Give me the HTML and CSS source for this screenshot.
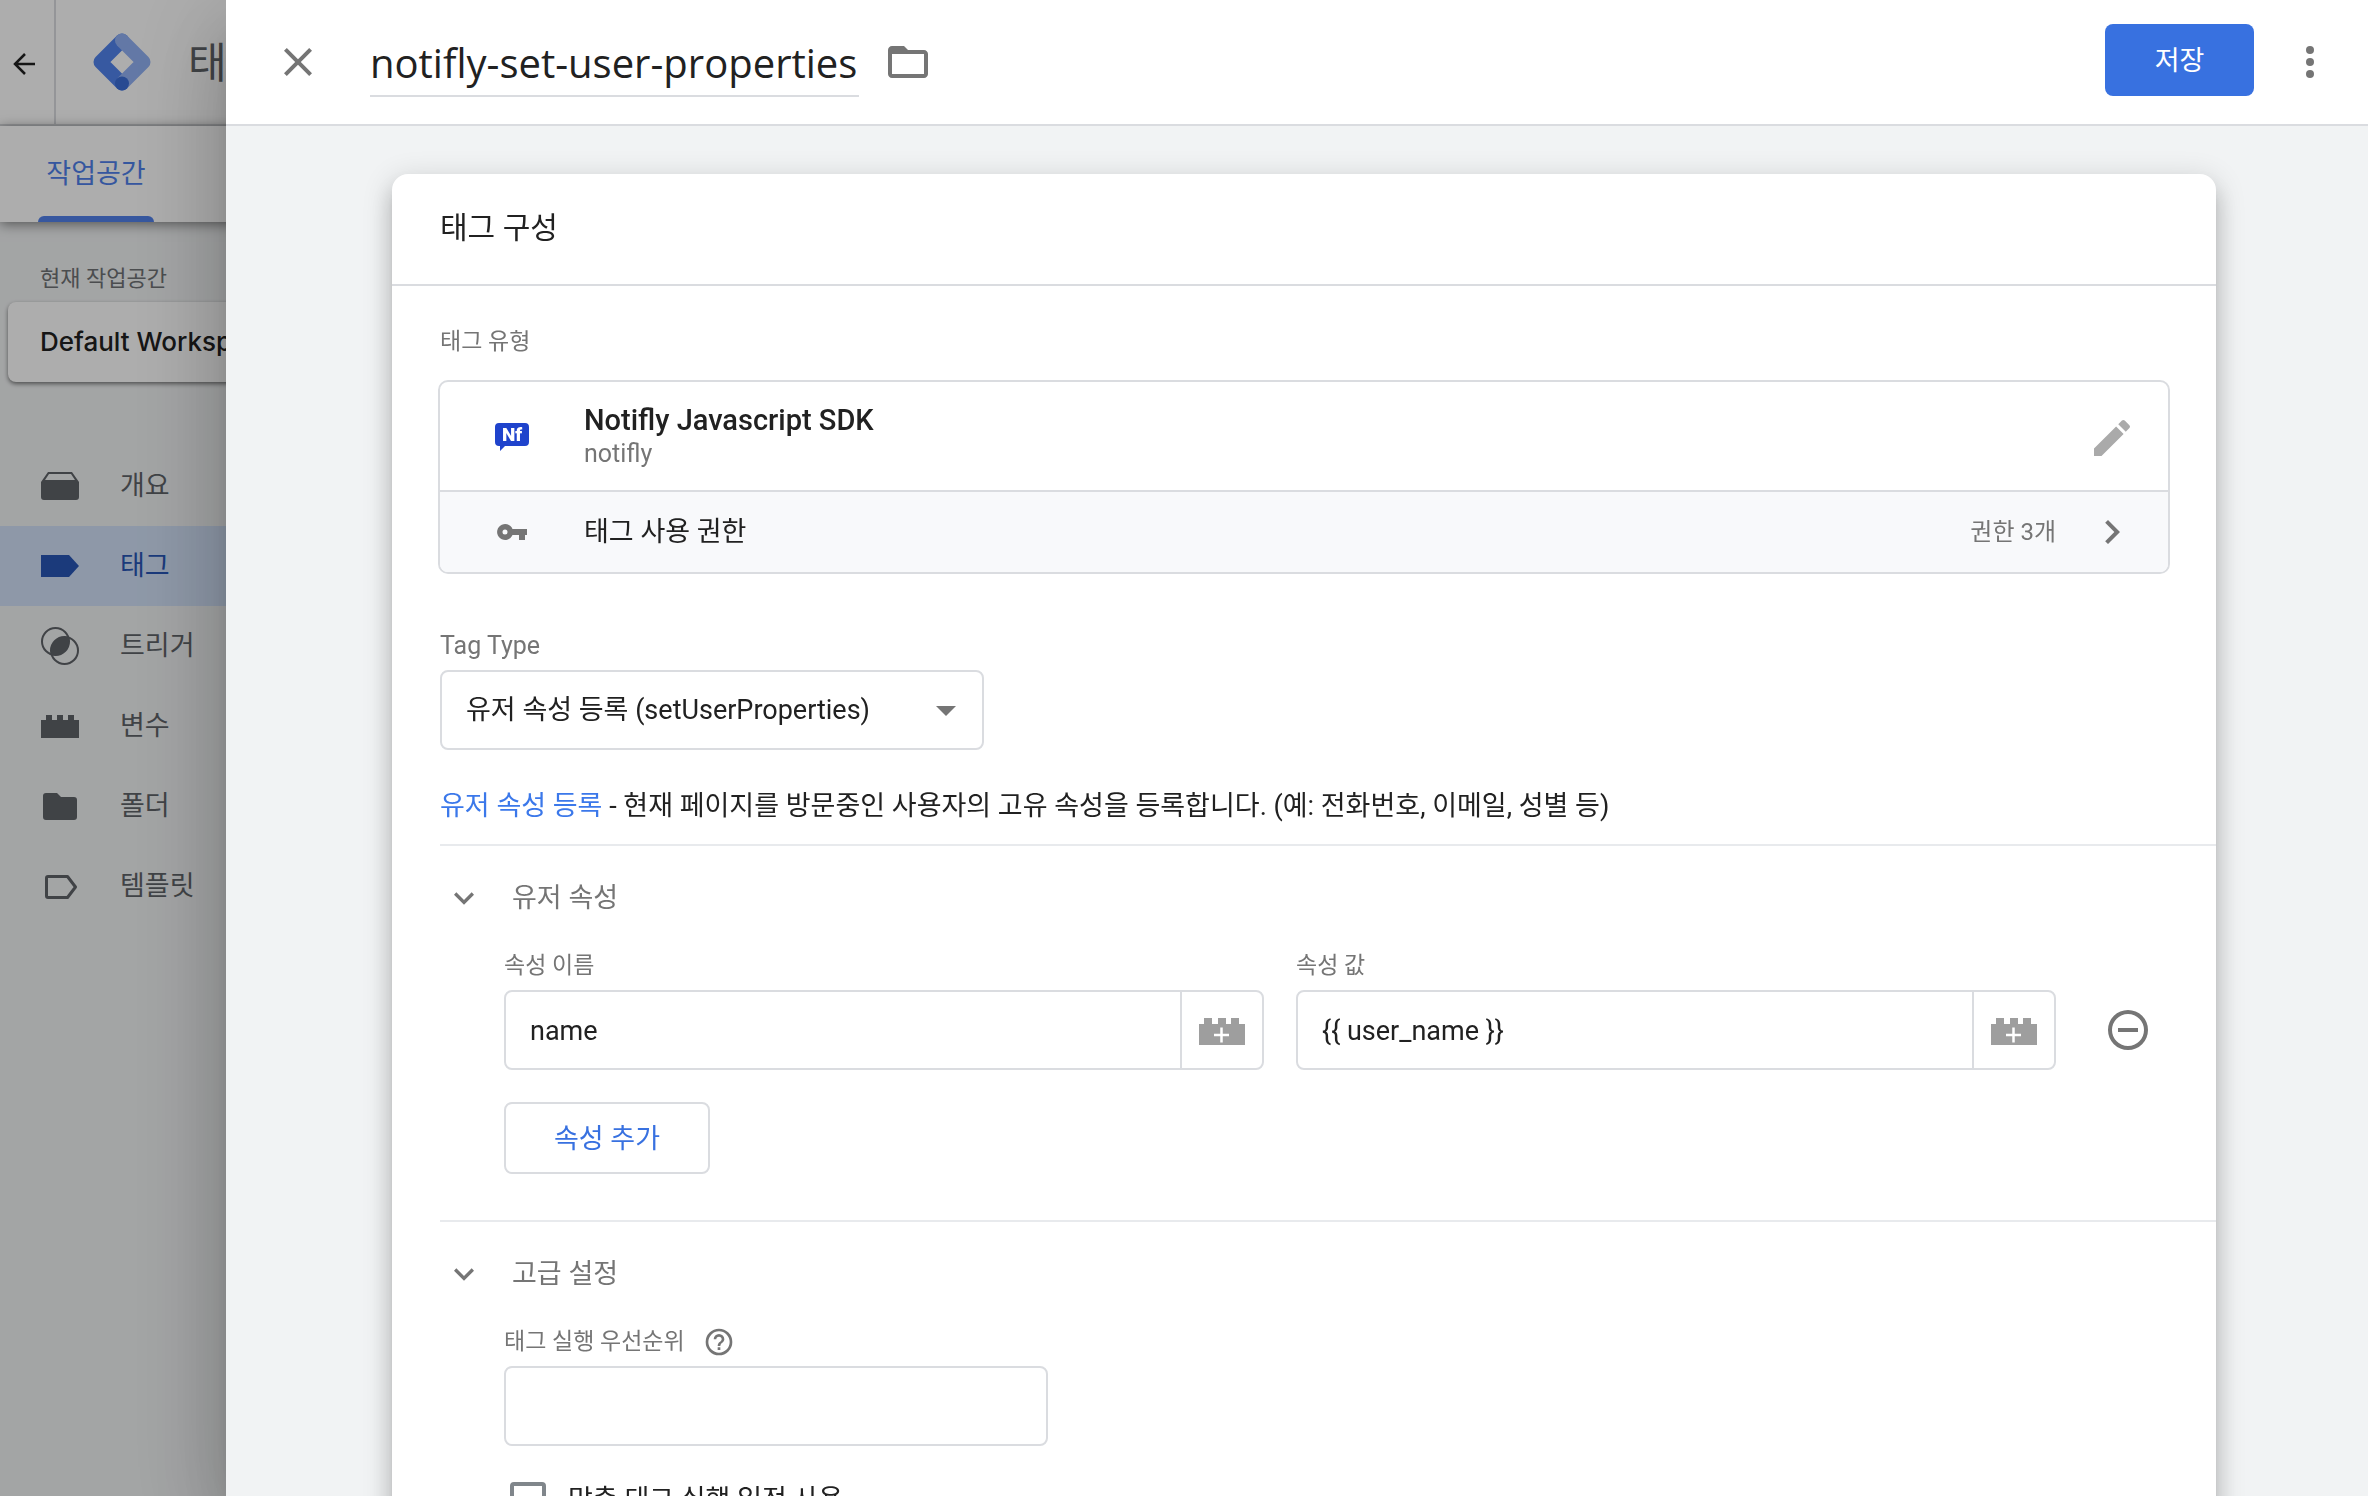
FILE: index.html
```html
<!DOCTYPE html>
<html lang="ko">
<head>
<meta charset="utf-8">
<meta name="viewport" content="width=device-width, initial-scale=1">
<title>notifly-set-user-properties</title>
<link rel="stylesheet" href="styles.css">
</head>
<body>
<svg class="sprite" aria-hidden="true">
  <symbol id="brick-plus" viewBox="0 0 46 28">
    <path fill="#9e9e9e" d="M0 6h5V0h8v6h6V0h8v6h5V0h8v6h6v21H0z"/>
    <path fill="none" stroke="#fff" stroke-width="2.500" d="M15 17h15M22.500 9.500v15"/>
  </symbol>
  <symbol id="expand" viewBox="0 0 24 24"><path d="M16.590 8.590L12 13.170 7.410 8.590 6 10l6 6 6-6z"/></symbol>
</svg>

<div class="app">
  <header class="topbar">
    <a class="back" href="#" aria-label="뒤로">
      <svg class="outline" width="32" height="32" viewBox="0 0 32 32" stroke="#212121" stroke-width="2.500"><path d="M27 16H7M17 6L7 16l10 10"/></svg>
    </a>
    <svg class="logo" width="60" height="60" viewBox="0 0 60 60" stroke-width="14" stroke-linejoin="round" stroke-linecap="round">
      <path stroke="#5284ee" d="M30 8.500L8.500 30 30 51.500"/>
      <path stroke="#92b2f5" stroke-linecap="butt" d="M30 51.500L51.500 30 30 8.500"/>
      <g stroke="none"><circle cx="30" cy="8.500" r="7" fill="#92b2f5"/><circle cx="30" cy="51.500" r="7" fill="#3b6ed8"/></g>
    </svg>
    <span class="product">태그 관리자</span>
  </header>
  <nav class="tabs"><a class="tab" href="#">작업공간</a></nav>
  <aside class="sidebar">
    <p class="workspace-label">현재 작업공간</p>
    <button class="workspace" type="button">Default Workspace</button>
    <ul class="nav">
      <li><a href="#"><svg width="40" height="32" viewBox="0 0 40 32"><path d="M1 12L8 2h24l7 10v15a3 3 0 0 1-3 3H4a3 3 0 0 1-3-3zM9 4L5 10h30l-4-6z" fill-rule="evenodd"/></svg>개요</a></li>
      <li><a class="active" href="#"><svg width="40" height="32" viewBox="0 0 40 32"><path d="M1 5h28l10 11-10 11H1z"/></svg>태그</a></li>
      <li><a href="#"><svg width="40" height="40" viewBox="0 0 40 40"><g fill="none" stroke="currentColor" stroke-width="2"><circle cx="15.500" cy="15.500" r="13.500"/><circle cx="24.500" cy="24.500" r="13.500"/></g><path d="M28.300 11.700A13.500 13.500 0 0 1 11.700 28.300 13.500 13.500 0 0 1 28.300 11.700z" stroke="currentColor"/></svg>트리거</a></li>
      <li><a href="#"><svg width="40" height="32" viewBox="0 0 40 32"><path d="M1 10h5V5h6v5h5V5h6v5h5V5h6v5h5v18H1z"/></svg>변수</a></li>
      <li><a href="#"><svg width="40" height="32" viewBox="0 0 40 32"><path d="M6 3h11l4 4h13a3 3 0 0 1 3 3v17a3 3 0 0 1-3 3H6a3 3 0 0 1-3-3V6a3 3 0 0 1 3-3z"/></svg>폴더</a></li>
      <li><a href="#"><svg width="40" height="32" viewBox="0 0 40 32"><path fill="none" stroke="currentColor" stroke-width="3" stroke-linejoin="round" d="M8 6.500h19.500l8 10.500-8 10.500H8a1.500 1.500 0 0 1-1.500-1.500V8A1.500 1.500 0 0 1 8 6.500z"/></svg>템플릿</a></li>
    </ul>
  </aside>
</div>

<div class="scrim"></div>

<main class="drawer">
  <header class="drawer-header">
    <button class="icon-button" type="button" aria-label="닫기"><svg width="48" height="48" viewBox="0 0 24 24"><path d="M19 6.410L17.590 5 12 10.590 6.410 5 5 6.410 10.590 12 5 17.590 6.410 19 12 13.410 17.590 19 19 17.590 13.410 12z"/></svg></button>
    <input class="tag-name" type="text" value="notifly-set-user-properties" aria-label="태그 이름">
    <button class="icon-button folder" type="button" aria-label="폴더"><svg width="48" height="48" viewBox="0 0 24 24"><path d="M9.170 6l2 2H20v10H4V6h5.170M10 4H4c-1.100 0-2 .9-2 2v12c0 1.100.9 2 2 2h16c1.100 0 2-.9 2-2V8c0-1.100-.9-2-2-2h-8l-2-2z"/><path d="M4 5h6l2 3H4z"/></svg></button>
    <button class="save" type="button">저장</button>
    <button class="icon-button" type="button" aria-label="더보기"><svg width="48" height="48" viewBox="0 0 24 24"><circle cx="12" cy="6" r="2"/><circle cx="12" cy="12" r="2"/><circle cx="12" cy="18" r="2"/></svg></button>
  </header>

  <div class="drawer-body">
    <section class="card">
      <h2 class="card-title">태그 구성</h2>
      <div class="card-body">
        <p class="label type-label">태그 유형</p>
        <div class="type-box">
          <div class="type-row product-row">
            <svg class="type-icon" width="36" height="32" viewBox="0 0 36 32">
              <path fill="#1f43cc" d="M5 1h26a4 4 0 0 1 4 4v15a4 4 0 0 1-4 4H11l-5 5v-5H5a4 4 0 0 1-4-4V5a4 4 0 0 1 4-4z"/>
              <text class="badge-text" x="18" y="19" text-anchor="middle">Nf</text>
            </svg>
            <div class="type-text">
              <div class="type-name">Notifly Javascript SDK</div>
              <div class="type-vendor">notifly</div>
            </div>
            <button class="icon-button pencil" type="button" aria-label="수정"><svg width="48" height="48" viewBox="0 0 24 24"><path d="M3 17.250V21h3.750L17.810 9.940l-3.750-3.750L3 17.250zM20.710 7.040a1 1 0 0 0 0-1.410l-2.340-2.340a1 1 0 0 0-1.410 0l-1.830 1.830 3.750 3.750 1.830-1.830z"/></svg></button>
          </div>
          <div class="type-row permissions">
            <svg class="type-icon" width="36" height="20" viewBox="0 0 36 20"><path fill-rule="evenodd" d="M18.500 7H33v6h-2v5h-6v-5h-6.500A8 8 0 1 1 18.500 7zM11 7.500a2.500 2.500 0 1 0 0 5 2.500 2.500 0 0 0 0-5z"/></svg>
            <div class="type-text">태그 사용 권한</div>
            <span class="permission-count">권한 3개</span>
            <button class="icon-button" type="button" aria-label="권한 보기"><svg width="48" height="48" viewBox="0 0 24 24"><path d="M10 6L8.590 7.410 13.170 12l-4.580 4.590L10 18l6-6z"/></svg></button>
          </div>
        </div>

        <label class="label latin" for="tag-type">Tag Type</label>
        <div class="select">
          <select id="tag-type"><option>유저 속성 등록 (setUserProperties)</option></select>
          <svg class="select-arrow" width="48" height="48" viewBox="0 0 24 24"><path d="M7 10l5 5 5-5z"/></svg>
        </div>
        <p class="description"><a href="#">유저 속성 등록</a> - 현재 페이지를 방문중인 사용자의 고유 속성을 등록합니다. (예: 전화번호, 이메일, 성별 등)</p>

        <section class="group">
          <button class="group-toggle" type="button" aria-expanded="true"><svg width="40" height="40"><use href="#expand"/></svg>유저 속성</button>
          <div class="group-body">
            <div class="property">
              <div class="field">
                <label class="label" for="prop-name">속성 이름</label>
                <div class="combo">
                  <input id="prop-name" type="text" value="name">
                  <button type="button" aria-label="변수 선택"><svg width="46" height="28"><use href="#brick-plus"/></svg></button>
                </div>
              </div>
              <div class="field">
                <label class="label" for="prop-value">속성 값</label>
                <div class="combo">
                  <input id="prop-value" type="text" value="{{ user_name }}">
                  <button type="button" aria-label="변수 선택"><svg width="46" height="28"><use href="#brick-plus"/></svg></button>
                </div>
              </div>
              <button class="icon-button remove" type="button" aria-label="삭제"><svg width="48" height="48" viewBox="0 0 24 24"><path d="M7 11v2h10v-2H7zm5-9a10 10 0 1 0 0 20 10 10 0 0 0 0-20zm0 18a8 8 0 1 1 0-16 8 8 0 0 1 0 16z"/></svg></button>
            </div>
            <button class="add" type="button">속성 추가</button>
          </div>
        </section>

        <section class="group">
          <button class="group-toggle" type="button" aria-expanded="true"><svg width="40" height="40"><use href="#expand"/></svg>고급 설정</button>
          <div class="group-body">
            <div class="label-row">
              <label class="label" for="priority">태그 실행 우선순위</label>
              <svg width="32" height="32" viewBox="0 0 24 24"><path d="M11 18h2v-2h-2v2zm1-16a10 10 0 1 0 0 20 10 10 0 0 0 0-20zm0 18a8 8 0 1 1 0-16 8 8 0 0 1 0 16zm0-14a4 4 0 0 0-4 4h2a2 2 0 1 1 4 0c0 2-3 1.750-3 5h2c0-2.250 3-2.500 3-5a4 4 0 0 0-4-4z"/></svg>
            </div>
            <input class="priority" id="priority" type="text">
            <label class="check"><input type="checkbox">맞춤 태그 실행 일정 사용</label>
          </div>
        </section>
      </div>
    </section>
  </div>
</main>
</body>
</html>
```
FILE: styles.css
```css
* { box-sizing: border-box; }

:root {
  --line: #dadce0;
  --text: #212121;
  --muted: #757575;
  --blue: #3871e0;
  --sans: Roboto, "Noto Sans CJK KR", sans-serif;
  --display: "Open Sans", "Noto Sans CJK KR", sans-serif;
}

html, body { height: 100%; }

body {
  margin: 0;
  overflow: hidden;
  background: #f1f3f4;
  color: var(--text);
  font: 27px/40px var(--sans);
}

p, h2, ul { margin: 0; padding: 0; }
a { color: inherit; text-decoration: none; }
svg { display: block; flex: none; fill: currentColor; }
button, input, select { font: inherit; color: inherit; }
button { padding: 0; border: 0; background: none; }

.sprite { position: absolute; width: 0; height: 0; }
.outline { fill: none; }

/* Workspace page behind the drawer */
.topbar {
  display: flex;
  align-items: center;
  height: 126px;
  background: #fff;
  border-bottom: 2px solid var(--line);
}
.back {
  display: flex;
  align-items: center;
  align-self: stretch;
  width: 56px;
  padding: 4px 0 0 8px;
  border-right: 2px solid var(--line);
}
.logo { margin: 0 36px 0 36px; fill: none; }
.product { color: #5f6368; font: 42px/60px var(--display); white-space: nowrap; }
.tabs {
  position: relative;
  display: flex;
  height: 96px;
  padding-left: 38px;
  background: #fff;
  box-shadow: 0 2px 12px rgba(0, 0, 0, .5);
}
.tab {
  display: flex;
  flex-direction: column;
  justify-content: space-between;
  padding-top: 28px;
  color: #4f80ea;
  text-align: center;
  width: 116px;
}
.tab::after {
  height: 6px;
  border-radius: 6px 6px 0 0;
  background: #5181eb;
  content: "";
}
.workspace-label { padding: 42px 0 8px 40px; color: #6f7275; font-size: 22px; line-height: 30px; }
.workspace {
  display: block;
  width: 420px;
  height: 80px;
  margin-left: 8px;
  padding-left: 32px;
  border-radius: 8px;
  background: #fff;
  box-shadow: 0 2px 4px rgba(0, 0, 0, .5);
  font: 500 26px/40px Inter, sans-serif;
  text-align: left;
}
.nav { margin-top: 64px; list-style: none; color: #5f6368; }
.nav a {
  display: flex;
  align-items: center;
  gap: 40px;
  height: 80px;
  padding-left: 40px;
}
.nav .active { background: #d2e1f8; color: #2856b6; }

.scrim { position: fixed; inset: 0; background: rgba(0, 0, 0, .32); }

/* Drawer */
.drawer {
  position: fixed;
  inset: 0 0 0 226px;
  display: flex;
  flex-direction: column;
  background: #f1f3f4;
  box-shadow: 0 22px 30px -14px rgba(0, 0, 0, .2), 0 48px 76px 6px rgba(0, 0, 0, .14), 0 18px 92px 16px rgba(0, 0, 0, .12);
}
.drawer-header {
  display: flex;
  flex: none;
  align-items: center;
  height: 126px;
  padding: 0 34px 0 48px;
  background: #fff;
  border-bottom: 2px solid var(--line);
}
.icon-button { flex: none; color: var(--muted); }
.tag-name {
  width: 489px;
  height: 66px;
  margin: 4px 0 0 48px;
  padding: 0 0 2px;
  border: 0;
  border-bottom: 2px solid var(--line);
  background: none;
  font: 40px/60px var(--display);
}
.folder { margin: 0 auto 0 25px; }
.save {
  width: 149px;
  height: 72px;
  margin: 0 32px 4px 0;
  padding-top: 2px;
  border-radius: 8px;
  background: var(--blue);
  color: #fff;
}

.drawer-body { flex: 1; min-height: 0; padding: 48px 152px 0 166px; overflow: hidden; }
.card {
  border-radius: 16px;
  background: #fff;
  box-shadow: 0 10px 10px -6px rgba(0, 0, 0, .2), 0 16px 20px 2px rgba(0, 0, 0, .14), 0 6px 28px 4px rgba(0, 0, 0, .12);
}
.card-title {
  padding: 32px 48px 34px;
  border-bottom: 2px solid var(--line);
  font-size: 30px;
  font-weight: 400;
  line-height: 44px;
}
.card-body { padding: 40px 0 64px 48px; }

.label { display: block; color: var(--muted); font-size: 23px; line-height: 32px; }
.label.latin { font-size: 25px; }
.type-label { padding-bottom: 22px; }
.type-box {
  margin: 0 46px 56px -2px;
  border: 2px solid var(--line);
  border-radius: 10px;
  overflow: hidden;
}
.type-row { display: flex; align-items: center; height: 108px; padding: 0 32px 0 54px; }
.product-row { padding-top: 4px; }
.type-icon { margin-right: 54px; color: var(--muted); }
.type-text { flex: 1; }
.type-name { font-size: 29px; font-weight: 500; line-height: 36px; }
.type-vendor { padding-bottom: 4px; color: var(--muted); font-size: 25px; line-height: 32px; }
.badge-text { fill: #fff; font: 900 19px var(--sans); }
.pencil { color: #aaa; }
.permissions { height: 82px; border-top: 2px solid var(--line); background: #f8f9fb; }
.permission-count { margin-right: 32px; color: var(--muted); font-size: 24px; }

.select { position: relative; width: 544px; margin-top: 8px; }
select, .priority, .combo {
  width: 100%;
  height: 80px;
  padding: 0 24px;
  border: 2px solid var(--line);
  border-radius: 8px;
  background: #fff;
}
select { display: block; appearance: none; }
.select-arrow { position: absolute; top: 16px; right: 14px; color: var(--muted); pointer-events: none; }
.description { margin: 36px 0 18px; }
.description a { color: #3b78ea; }

.group { padding: 32px 0 46px; border-top: 2px solid #e8eaed; }
.group-toggle { display: flex; align-items: center; gap: 28px; margin-left: 4px; color: var(--muted); }
.group-body { padding: 32px 64px 0 64px; }
.property { display: flex; align-items: flex-end; gap: 32px; }
.field { flex: 1; }
.combo { display: flex; margin-top: 8px; padding: 0; }
.combo input { flex: 1; min-width: 0; padding: 2px 24px 0; border: 0; background: none; }
.combo button { display: grid; place-items: center; width: 82px; padding-top: 4px; border-left: 2px solid var(--line); }
.remove { margin: 0 0 16px 16px; }
.add {
  display: block;
  width: 206px;
  height: 72px;
  margin-top: 32px;
  padding-top: 2px;
  border: 2px solid var(--line);
  border-radius: 8px;
  color: var(--blue);
}
.label-row { display: flex; gap: 18px; color: var(--muted); }
.priority { display: block; width: 544px; margin-top: 8px; }
.check { display: flex; align-items: center; gap: 22px; margin: 34px 0 0 6px; }
.check input {
  width: 36px;
  height: 36px;
  margin: 0;
  appearance: none;
  border: 4px solid #80868b;
  border-radius: 4px;
}
```
